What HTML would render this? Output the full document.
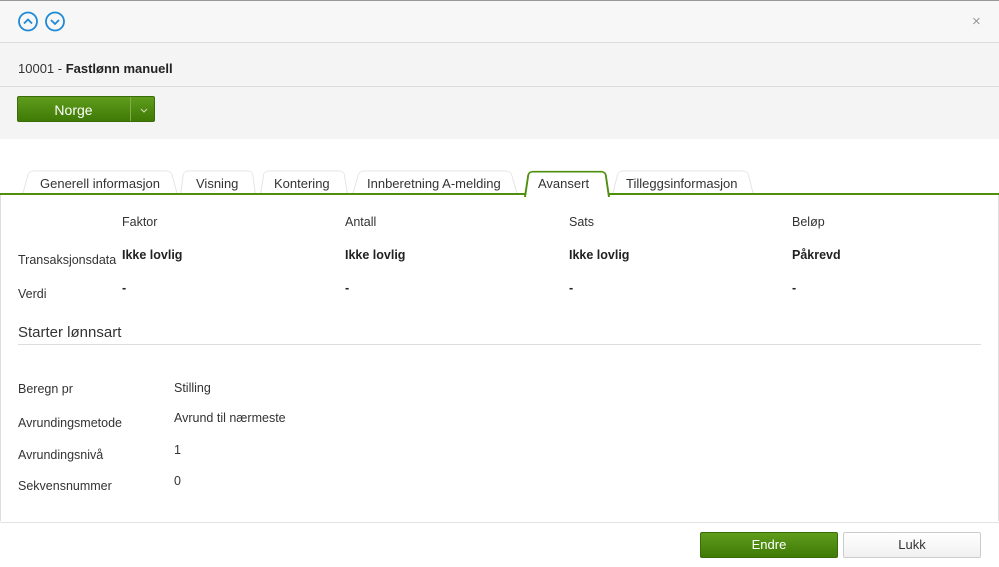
<!DOCTYPE html>
<html><head><style>
body{margin:0;width:999px;height:567px;overflow:hidden;font-family:"Liberation Sans",sans-serif;font-size:13px;color:#333;background:#fff;position:relative}
.a{position:absolute}
.tab{position:absolute;top:168px;height:26px;background:#fff;border:1px solid #e3e3e3;border-bottom:none;border-radius:5px 5px 0 0;transform:perspective(40px) rotateX(8deg);transform-origin:bottom}
.tl{position:absolute;top:176px;font-size:13px;color:#333}
.lbl{position:absolute;font-size:12.5px;color:#333}
.b{font-weight:bold;color:#222}
</style></head><body>
<div class="a" style="left:0;top:0;width:999px;height:42px;background:#f7f7f7;border-bottom:1px solid #ddd"></div>
<div class="a" style="left:0;top:43px;width:999px;height:43px;background:#f4f4f4;border-bottom:1px solid #ddd"></div>
<div class="a" style="left:0;top:87px;width:999px;height:52px;background:#f4f4f4"></div>
<div class="a" style="left:0;top:0;width:999px;height:1px;background:#999"></div>
<svg class="a" style="left:17px;top:11px" width="50" height="22"><circle cx="11" cy="10.5" r="9" fill="none" stroke="#1e8ad6" stroke-width="1.8"/><path d="M7 12.5l4-4 4 4" fill="none" stroke="#1e8ad6" stroke-width="1.8"/><circle cx="38" cy="10.5" r="9" fill="none" stroke="#1e8ad6" stroke-width="1.8"/><path d="M34 9l4 4 4-4" fill="none" stroke="#1e8ad6" stroke-width="1.8"/></svg>
<div class="a" style="left:972px;top:13px;color:#999;font-size:15px">×</div>
<div class="a" style="left:18px;top:61px;font-size:13px;color:#333">10001 - <b style="color:#222">Fastlønn manuell</b></div>
<div class="a" style="left:17px;top:96px;width:138px;height:26px;background:linear-gradient(#5f9c1c,#3f7a06);border-radius:2px;border:1px solid #3a6d08;box-sizing:border-box"></div>
<div class="a" style="left:130px;top:97px;width:1px;height:24px;background:#7fae4a"></div>
<div class="a" style="left:17px;top:102px;width:113px;text-align:center;color:#fff;font-size:14px">Norge</div>
<svg class="a" style="left:138px;top:105px" width="12" height="10"><path d="M3 4l3 3 3-3" fill="none" stroke="#cfe2bc" stroke-width="1"/></svg>

<div class="tab" style="left:22px;width:154px"></div>
<div class="tab" style="left:180px;width:74px"></div>
<div class="tab" style="left:260px;width:86px"></div>
<div class="tab" style="left:352px;width:164px"></div>
<div class="tab" style="left:524px;width:82px;border:2px solid #4e8f0e;border-bottom:none;z-index:2;height:27px"></div>
<div class="tab" style="left:612px;width:140px"></div>
<div class="a" style="left:0;top:193px;width:999px;height:2px;background:#4e8f0e"></div>
<div class="a" style="left:527px;top:193px;width:78px;height:2px;background:#fff;z-index:3"></div>
<div class="tl" style="left:40px">Generell informasjon</div>
<div class="tl" style="left:196px">Visning</div>
<div class="tl" style="left:274px">Kontering</div>
<div class="tl" style="left:367px">Innberetning A-melding</div>
<div class="tl" style="left:538px;z-index:4">Avansert</div>
<div class="tl" style="left:626px">Tilleggsinformasjon</div>
<div class="a" style="left:0;top:195px;width:1px;height:326px;background:#ddd"></div>
<div class="a" style="left:998px;top:195px;width:1px;height:326px;background:#ddd"></div>

<div class="lbl" style="left:122px;top:215px">Faktor</div>
<div class="lbl" style="left:345px;top:215px">Antall</div>
<div class="lbl" style="left:569px;top:215px">Sats</div>
<div class="lbl" style="left:792px;top:215px">Beløp</div>
<div class="lbl" style="left:18px;top:253px">Transaksjonsdata</div>
<div class="lbl b" style="left:122px;top:248px">Ikke lovlig</div>
<div class="lbl b" style="left:345px;top:248px">Ikke lovlig</div>
<div class="lbl b" style="left:569px;top:248px">Ikke lovlig</div>
<div class="lbl b" style="left:792px;top:248px">Påkrevd</div>
<div class="lbl" style="left:18px;top:287px">Verdi</div>
<div class="lbl b" style="left:122px;top:281px">-</div>
<div class="lbl b" style="left:345px;top:281px">-</div>
<div class="lbl b" style="left:569px;top:281px">-</div>
<div class="lbl b" style="left:792px;top:281px">-</div>
<div class="lbl" style="left:18px;top:324px;font-size:15px">Starter lønnsart</div>
<div class="a" style="left:18px;top:344px;width:963px;height:1px;background:#ddd"></div>
<div class="lbl" style="left:18px;top:382px">Beregn pr</div>
<div class="lbl" style="left:174px;top:381px">Stilling</div>
<div class="lbl" style="left:18px;top:416px">Avrundingsmetode</div>
<div class="lbl" style="left:174px;top:411px">Avrund til nærmeste</div>
<div class="lbl" style="left:18px;top:448px">Avrundingsnivå</div>
<div class="lbl" style="left:174px;top:443px">1</div>
<div class="lbl" style="left:18px;top:479px">Sekvensnummer</div>
<div class="lbl" style="left:174px;top:474px">0</div>

<div class="a" style="left:0;top:522px;width:999px;height:1px;background:#e3e3e3"></div>
<div class="a" style="left:700px;top:532px;width:138px;height:26px;background:linear-gradient(#5f9c1c,#3f7a06);border:1px solid #3a6d08;border-radius:2px;box-sizing:border-box;color:#fff;text-align:center;line-height:24px;font-size:13px">Endre</div>
<div class="a" style="left:843px;top:532px;width:138px;height:26px;background:linear-gradient(#fff,#f0f0f0);border:1px solid #ccc;border-radius:2px;box-sizing:border-box;color:#333;text-align:center;line-height:24px;font-size:13px">Lukk</div>
</body></html>
